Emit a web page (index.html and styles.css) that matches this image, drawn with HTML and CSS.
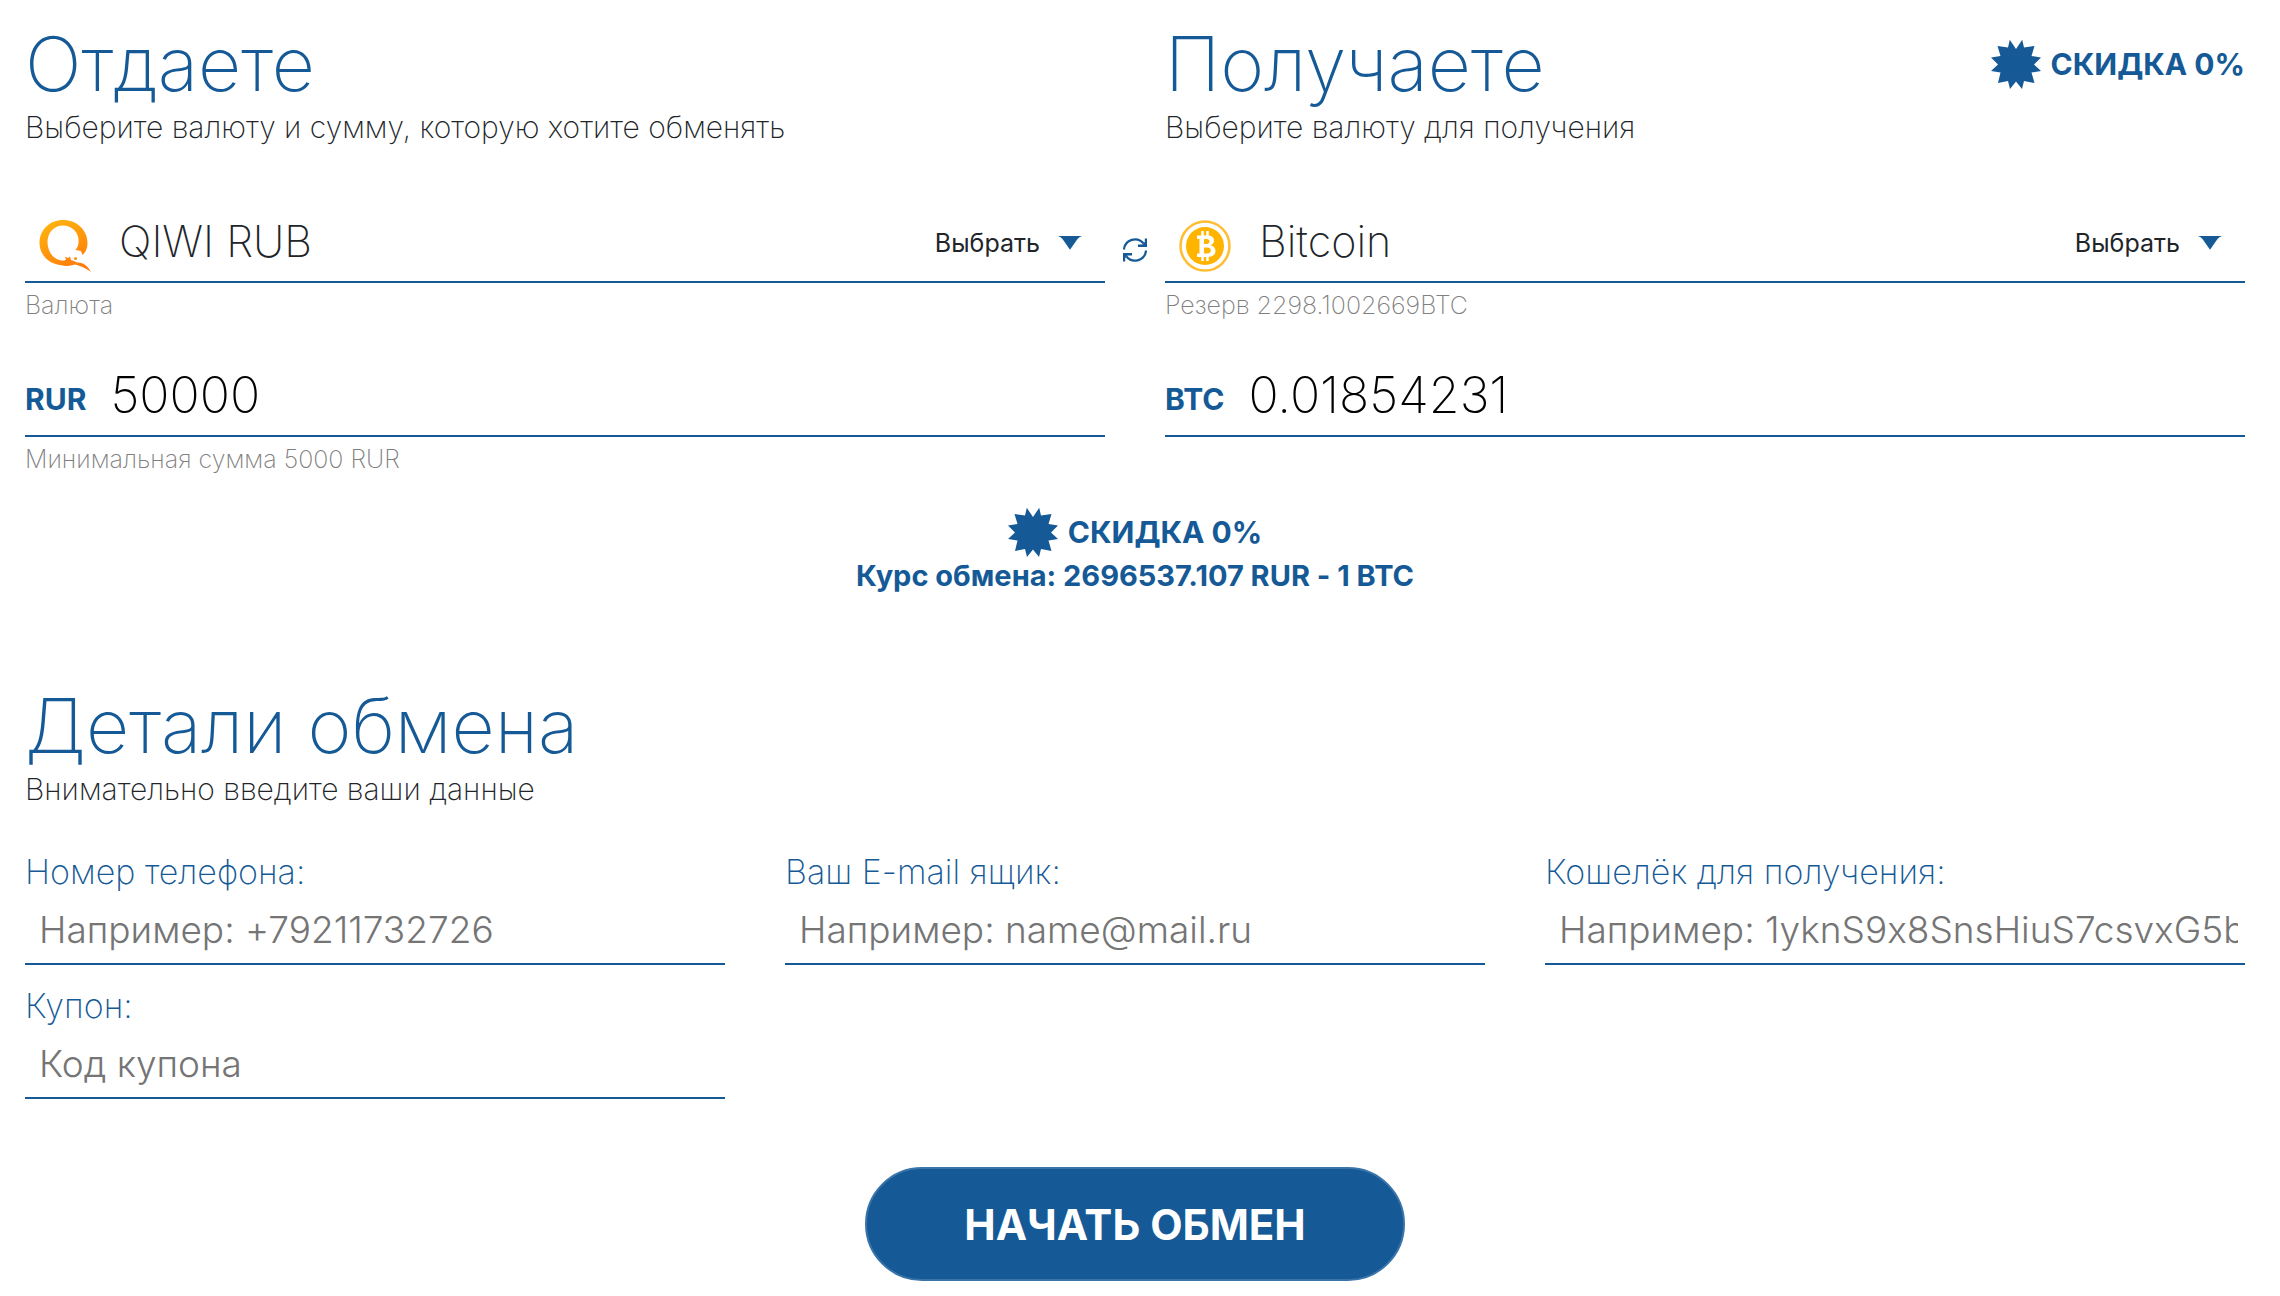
FILE: index.html
```html
<!DOCTYPE html>
<html lang="ru">
<head>
<meta charset="utf-8">
<meta name="viewport" content="width=device-width, initial-scale=1">
<title>Обмен валют</title>
<link rel="stylesheet" href="styles.css">
</head>
<body>
<svg class="sprite" aria-hidden="true">
  <symbol id="burst" viewBox="0 0 50 50">
    <path d="M25 10L31.200 0.800L33 8.500L43.500 7L40.500 17L50 18.500L43 25.500L50 32L40.500 33.500L43.500 44L33 42L31 50L25 42.500L19 50L17 42L7 44L9.500 33.500L0 32L7 25.500L0 18.500L9.500 17L6.500 7L17 8.500L18.800 0.800Z"/>
  </symbol>
</svg>
<form class="exchange">
  <section class="pair">
    <div class="side">
      <header class="heading">
        <h2 class="title">Отдаете</h2>
        <p class="subtitle">Выберите валюту и сумму, которую хотите обменять</p>
      </header>
      <div class="currency">
        <svg class="coin" viewBox="0 0 52 52" aria-hidden="true">
          <defs>
            <linearGradient id="qiwi" x1="0" y1="0" x2="0.500" y2="1">
              <stop offset="0" stop-color="#ffb910"/>
              <stop offset="1" stop-color="#ff7d0a"/>
            </linearGradient>
          </defs>
          <path fill="url(#qiwi)" fill-rule="evenodd" d="M24 0C38 0 48.500 10 48.500 23C48.500 28 46.500 32.500 43.500 35L42 31L36.500 30C39 27 40 24 39.500 19C38.500 11 32 5.500 24 5.500C15 5.500 8.500 12.500 8.500 22C8.500 32 15 40.500 24 40.500C25.500 40.500 26.500 40 27 39.500L26 36.500L29 38L31 36.500L32 40L35 41L38 42.500C44 42 49 46 52 52C46 48 42 46 36 44.500C32 46 28 46.500 24 45.500C10 44.500 0.500 35 0.500 23C0.500 9.500 11 0 24 0Z"/>
          <circle cx="36.500" cy="38.500" r="1.500" fill="#ff8b1c"/>
        </svg>
        <select class="currency-select" id="give" aria-label="Отдаете, валюта"><option>QIWI RUB</option></select>
        <label class="choose" for="give">Выбрать
          <svg class="arrow" viewBox="0 0 24 14" aria-hidden="true"><path d="M0 0H24Q21 1 19.500 3L12.500 13Q12 14 11.500 13L4.500 3Q3 1 0 0Z"/></svg>
        </label>
      </div>
      <p class="hint">Валюта</p>
      <div class="amount">
        <label class="unit" for="give-sum">RUR</label>
        <input class="sum" id="give-sum" type="text" inputmode="decimal" value="50000">
      </div>
      <p class="hint">Минимальная сумма 5000 RUR</p>
    </div>
    <button class="swap" type="button" aria-label="Поменять местами">
      <svg class="swap-icon" viewBox="0 0 24 24" aria-hidden="true">
        <path d="M1 11.500A11 11 0 0 1 20.500 5.500M23 12.500A11 11 0 0 1 3.500 18.500" fill="none" stroke="currentColor" stroke-width="2.200"/>
        <path d="M24 0.500V9H15V6.500H19.500L21.800 4V0.500ZM0 23.500V15H9V17.500H4.500L2.200 20V23.500Z" fill="currentColor"/>
      </svg>
    </button>
    <div class="side">
      <header class="heading heading-split">
        <div>
          <h2 class="title">Получаете</h2>
          <p class="subtitle">Выберите валюту для получения</p>
        </div>
        <p class="discount"><svg class="burst" aria-hidden="true"><use href="#burst"/></svg>СКИДКА 0%</p>
      </header>
      <div class="currency">
        <svg class="coin" viewBox="0 0 52 52" aria-hidden="true">
          <circle cx="26" cy="26" r="24.500" fill="#fff" stroke="#ffbe32" stroke-width="2.500"/>
          <circle cx="26" cy="26" r="19" fill="#ffb400"/>
          <path d="M18 15.500H28C33 15.500 35 17.500 35 20.500C35 23 33.500 24.500 31.500 25.200C34.500 26 36.500 28 36.500 31C36.500 35 33 37 28.500 37H18V33.500H20.500V19H18ZM25 19V24H27.500C29.500 24 30.500 23 30.500 21.500C30.500 20 29.500 19 27.500 19ZM25 27.500V33.500H28C30.500 33.500 31.800 32.500 31.800 30.500C31.800 28.500 30.500 27.500 28 27.500Z" fill="#fff"/>
          <path d="M23.500 11V16M28.500 11V16M23.500 36V41M28.500 36V41" stroke="#fff" stroke-width="2.500"/>
        </svg>
        <select class="currency-select" id="get" aria-label="Получаете, валюта"><option>Bitcoin</option></select>
        <label class="choose" for="get">Выбрать
          <svg class="arrow" viewBox="0 0 24 14" aria-hidden="true"><path d="M0 0H24Q21 1 19.500 3L12.500 13Q12 14 11.500 13L4.500 3Q3 1 0 0Z"/></svg>
        </label>
      </div>
      <p class="hint">Резерв 2298.1002669BTC</p>
      <div class="amount">
        <label class="unit" for="get-sum">BTC</label>
        <input class="sum" id="get-sum" type="text" inputmode="decimal" value="0.01854231">
      </div>
    </div>
  </section>

  <section class="rate">
    <p class="discount"><svg class="burst" aria-hidden="true"><use href="#burst"/></svg>СКИДКА 0%</p>
    <p class="rate-text">Курс обмена: 2696537.107 RUR - 1 BTC</p>
  </section>

  <section>
    <h2 class="title">Детали обмена</h2>
    <p class="subtitle">Внимательно введите ваши данные</p>
    <div class="fields">
      <div class="field">
        <label class="field-label" for="phone">Номер телефона:</label>
        <input class="field-input" id="phone" type="tel" placeholder="Например: +79211732726">
      </div>
      <div class="field">
        <label class="field-label" for="email">Ваш E-mail ящик:</label>
        <input class="field-input" id="email" type="email" placeholder="Например: name@mail.ru">
      </div>
      <div class="field">
        <label class="field-label" for="wallet">Кошелёк для получения:</label>
        <input class="field-input" id="wallet" type="text" placeholder="Например: 1yknS9x8SnsHiuS7csvxG5b">
      </div>
      <div class="field">
        <label class="field-label" for="coupon">Купон:</label>
        <input class="field-input" id="coupon" type="text" placeholder="Код купона">
      </div>
    </div>
  </section>

  <button class="submit" type="submit">НАЧАТЬ ОБМЕН</button>
</form>
</body>
</html>
```
FILE: styles.css
```css
:root {
  --blue: #155a96;
  --ink: #212529;
  --muted: #808080;
}

* {
  box-sizing: border-box;
}

body {
  margin: 0;
  background: #fff;
  color: var(--ink);
  font-family: Inter, "Open Sans", sans-serif;
  font-variant-ligatures: no-contextual;
  font-weight: 250;
}

h2,
p {
  margin: 0;
}

.sprite {
  display: none;
}

.exchange {
  display: flex;
  flex-direction: column;
  padding: 22px 35px 15px 25px;
}

.pair {
  display: grid;
  grid-template-columns: minmax(0, 1fr) 60px minmax(0, 1fr);
}

.heading {
  margin-bottom: 53px;
}

.heading-split {
  display: flex;
  justify-content: space-between;
  align-items: flex-start;
}

.title {
  color: var(--blue);
  font-size: 75px;
  line-height: 84px;
  font-weight: 250;
}

.subtitle {
  font-size: 30px;
  line-height: 42px;
}

.discount {
  display: flex;
  align-items: center;
  gap: 10px;
  color: var(--blue);
  font-size: 30px;
  line-height: 50px;
  font-weight: 700;
}

.heading-split .discount {
  padding-top: 17px;
}

.burst {
  width: 50px;
  height: 50px;
  fill: currentColor;
}

.currency {
  display: flex;
  align-items: center;
  height: 82px;
  padding: 0 23px 0 14px;
  border-bottom: 2px solid var(--blue);
}

.coin {
  flex: none;
  width: 52px;
  height: 52px;
  margin: 10px 28px 0 0;
}

.currency-select {
  flex: 1;
  min-width: 0;
  height: 60px;
  padding: 0;
  border: 0;
  appearance: none;
  background: none;
  color: inherit;
  font: inherit;
  font-size: 43px;
}

.choose {
  display: flex;
  align-items: center;
  gap: 18px;
  padding-top: 4px;
  font-size: 25px;
  line-height: 36px;
  font-weight: 400;
}

.arrow {
  width: 24px;
  height: 14px;
  fill: var(--blue);
}

.hint {
  color: var(--muted);
  font-size: 25px;
  line-height: 44px;
}

.amount {
  display: flex;
  align-items: center;
  gap: 24px;
  height: 82px;
  margin-top: 28px;
  border-bottom: 2px solid var(--blue);
}

.unit {
  color: var(--blue);
  font-size: 30px;
  line-height: 40px;
  font-weight: 700;
  padding-top: 8px;
}

.sum {
  flex: 1;
  min-width: 0;
  height: 80px;
  padding: 0;
  border: 0;
  background: none;
  color: #000;
  font: inherit;
  font-size: 50px;
}

.swap {
  justify-self: center;
  align-self: start;
  display: flex;
  margin-top: 216px;
  padding: 0;
  border: 0;
  background: none;
  color: var(--blue);
}

.swap-icon {
  width: 24px;
  height: 24px;
}

.rate {
  display: flex;
  flex-direction: column;
  align-items: center;
  margin: 26px 0 89px;
}

.rate-text {
  color: var(--blue);
  font-size: 29px;
  line-height: 38px;
  font-weight: 700;
}

.fields {
  display: grid;
  grid-template-columns: repeat(3, minmax(0, 1fr));
  gap: 17px 60px;
  margin-top: 38px;
}

.field {
  display: flex;
  flex-direction: column;
}

.field-label {
  color: var(--blue);
  font-size: 34px;
  line-height: 48px;
}

.field-input {
  width: 100%;
  height: 69px;
  padding: 0 7px 0 14px;
  border: 0;
  border-bottom: 2px solid var(--blue);
  background: none;
  color: #000;
  font: inherit;
  font-size: 37px;
  font-weight: 300;
}

.field-input::placeholder {
  color: #757575;
  opacity: 1;
}

.submit {
  align-self: center;
  min-width: 540px;
  height: 114px;
  margin-top: 68px;
  padding: 0 60px;
  border: 2px solid #3b74a9;
  border-radius: 57px;
  background: var(--blue);
  color: #fff;
  font: inherit;
  font-size: 42px;
  font-weight: 700;
}
```
